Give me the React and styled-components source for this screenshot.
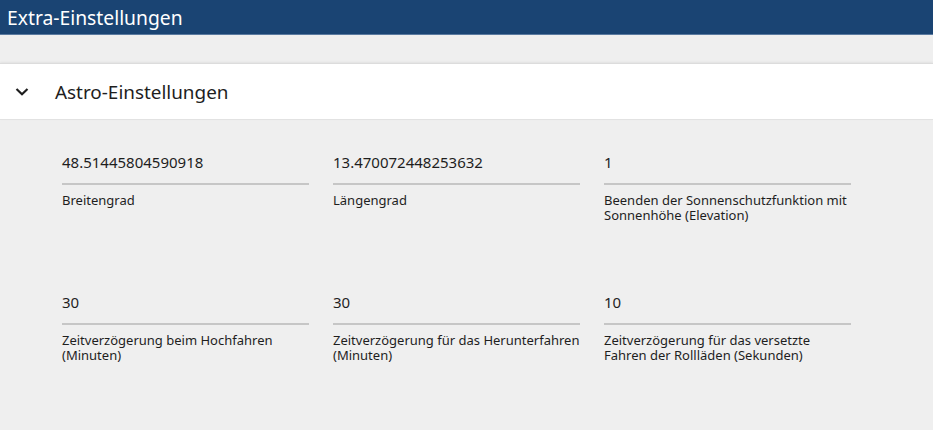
import React from "react";
import styled, { createGlobalStyle } from "styled-components";

const Global = createGlobalStyle`
  html, body { margin: 0; padding: 0; background: #efefef; }
  body { font-family: "Noto Sans", "Open Sans", sans-serif; color: #1e1e1e; }
`;

const Page = styled.div`
  width: 933px;
  height: 430px;
  background: #efefef;
  overflow: hidden;
`;

const TopBar = styled.header`
  height: 35px;
  background: #1a4473;
  border-bottom: 1px solid #5a7aa0;
  box-sizing: border-box;
  display: flex;
  align-items: center;
  padding-left: 7px;
  color: #ffffff;
  font-size: 19.3px;
`;

const Spacer = styled.div`
  height: 28px;
`;

const Panel = styled.section`
  display: flex;
  flex-direction: column;
`;

const PanelHeader = styled.div`
  height: 55px;
  background: #ffffff;
  border-top: 1px solid #dcdcdc;
  border-bottom: 1px solid #e2e2e2;
  box-shadow: 0 -1px 2px rgba(0,0,0,0.06);
  display: flex;
  align-items: center;
  padding-left: 15px;
  gap: 26px;
  font-size: 18.9px;
  color: #1e1e1e;
`;

const Chevron = styled.svg`
  width: 14px;
  height: 10px;
  flex: none;
`;

const Grid = styled.div`
  display: grid;
  grid-template-columns: repeat(3, 247px);
  column-gap: 24px;
  padding: 29px 0 0 62px;
`;

const Field = styled.div`
  height: 140px;
  display: flex;
  flex-direction: column;
`;

const Value = styled.div`
  height: 36px;
  box-sizing: border-box;
  padding-top: 3px;
  font-size: 15px;
  line-height: 20px;
  color: #1e1e1e;
  border-bottom: 2px solid #c6c6c6;
`;

const Label = styled.div`
  margin-top: 8px;
  font-size: 13px;
  line-height: 15px;
  color: #1e1e1e;
`;

const fields = [
  { value: "48.51445804590918", label: "Breitengrad" },
  { value: "13.470072448253632", label: "Längengrad" },
  { value: "1", label: "Beenden der Sonnenschutzfunktion mit Sonnenhöhe (Elevation)" },
  { value: "30", label: "Zeitverzögerung beim Hochfahren (Minuten)" },
  { value: "30", label: "Zeitverzögerung für das Herunterfahren (Minuten)" },
  { value: "10", label: "Zeitverzögerung für das versetzte Fahren der Rollläden (Sekunden)" },
];

export default function App() {
  return (
    <Page>
      <Global />
      <TopBar>Extra-Einstellungen</TopBar>
      <Spacer />
      <Panel>
        <PanelHeader>
          <Chevron viewBox="0 0 14 10">
            <path d="M1.5 2 L7 7.2 L12.5 2" fill="none" stroke="#1e1e1e" strokeWidth="2.2" />
          </Chevron>
          Astro-Einstellungen
        </PanelHeader>
        <Grid>
          {fields.map((f, i) => (
            <Field key={i}>
              <Value>{f.value}</Value>
              <Label>{f.label}</Label>
            </Field>
          ))}
        </Grid>
      </Panel>
    </Page>
  );
}
